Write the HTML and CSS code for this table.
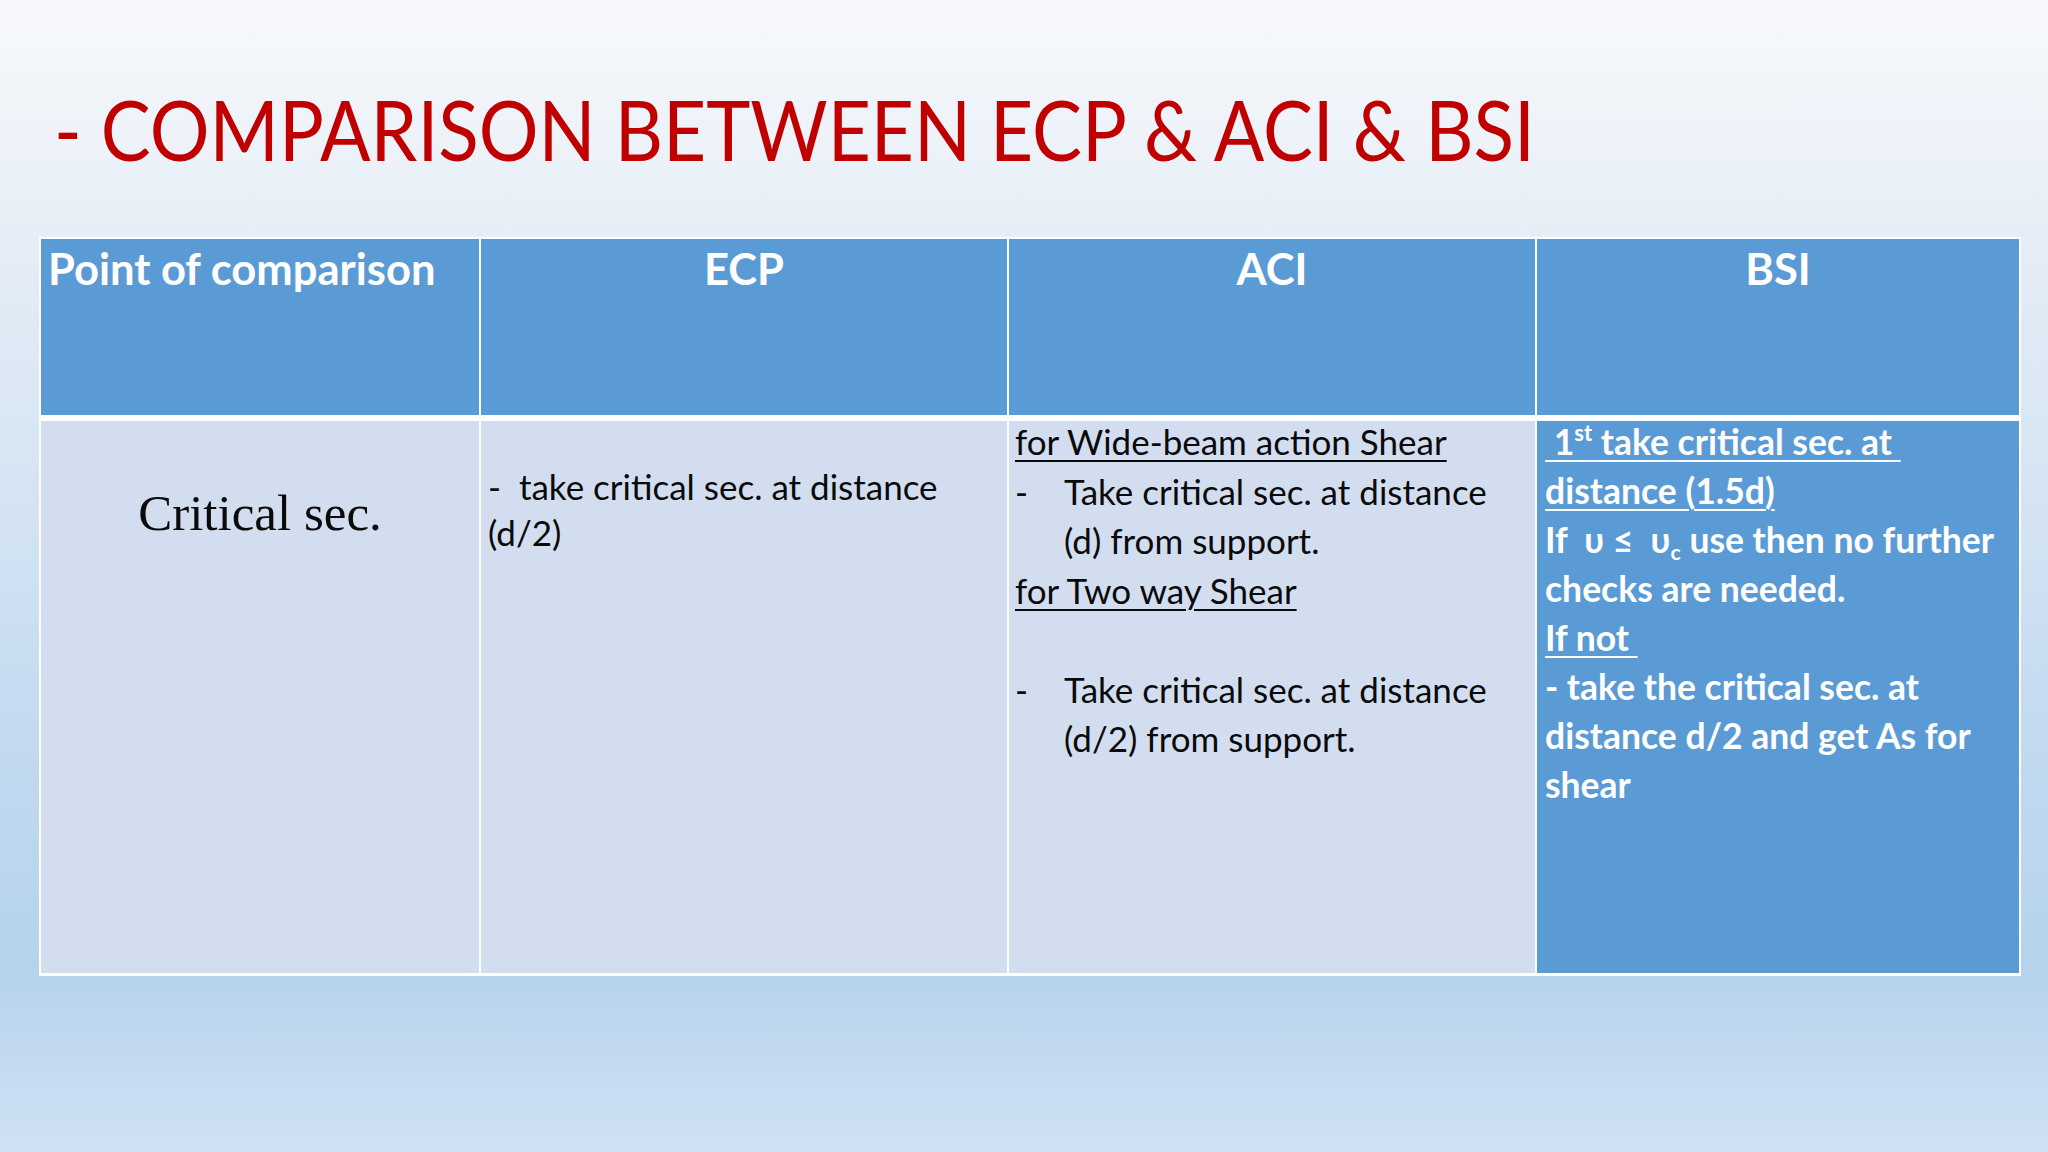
FILE: index.html
```html
<!DOCTYPE html>
<html lang="en">
<head>
<meta charset="utf-8">
<title>Comparison between ECP &amp; ACI &amp; BSI</title>
<link rel="stylesheet" href="styles.css">
</head>
<body>
<div class="slide">
  <h1 class="title"><span class="title-text">- COMPARISON BETWEEN ECP &amp; ACI &amp; BSI</span></h1>
  <div class="grid">
    <div class="hcell hleft">Point of comparison</div>
    <div class="hcell hcenter">ECP</div>
    <div class="hcell hcenter">ACI</div>
    <div class="hcell hcenter">BSI</div>

    <div class="bcell crit"><p class="crit-text">Critical sec.</p></div>

    <div class="bcell ecp">
      <p class="ecp-text">-&nbsp; take critical sec. at distance<br>(d/2)</p>
    </div>

    <div class="bcell aci">
      <div class="aci-text">
        <p class="line u">for Wide-beam action Shear</p>
        <div class="item">
          <span class="dash">-</span>
          <p>Take critical sec. at distance<br>(d) from support.</p>
        </div>
        <p class="line u">for Two way Shear</p>
        <p class="line blank">&nbsp;</p>
        <div class="item">
          <span class="dash">-</span>
          <p>Take critical sec. at distance<br>(d/2) from support.</p>
        </div>
      </div>
    </div>

    <div class="bcell bsi">
      <div class="bsi-text">
        <p class="line"><span class="u">&nbsp;1<sup>st</sup> take critical sec. at&nbsp;</span></p>
        <p class="line"><span class="u">distance (1.5d)</span></p>
        <p class="line">If&nbsp; υ ≤&nbsp; υ<sub>c</sub> use then no further</p>
        <p class="line">checks are needed.</p>
        <p class="line"><span class="u">If not&nbsp;</span></p>
        <p class="line">- take the critical sec. at</p>
        <p class="line">distance d/2 and get As for</p>
        <p class="line">shear</p>
      </div>
    </div>
  </div>
</div>
</body>
</html>
```
FILE: styles.css
```css
html, body {
  margin: 0;
  padding: 0;
}

body {
  width: 2048px;
  height: 1152px;
  overflow: hidden;
  font-family: "Lato", "Open Sans", "Liberation Sans", sans-serif;
  background: linear-gradient(to bottom,
    #f6f8fc 0%,
    #eef3f9 12%,
    #e5edf6 21%,
    #d3e3f3 45%,
    #c2d9ef 65%,
    #b5d3ec 84%,
    #c3daf0 92%,
    #d0e2f3 100%);
}

.slide {
  padding-top: 79px;
}

.title {
  margin: 0;
  padding-left: 54px;
  font-family: "Lato", "Liberation Sans", sans-serif;
  font-weight: 400;
  font-size: 83px;
  line-height: 100px;
  height: 100px;
  color: #c00000;
  white-space: nowrap;
}

.title-text {
  display: inline-block;
  transform: scaleX(0.9);
  transform-origin: left center;
}

.grid {
  margin-top: 58px;
  margin-left: 39px;
  width: 1978px;
  padding: 2px 2px 3px 2px;
  background: #ffffff;
  display: grid;
  grid-template-columns: 438px 526px 526px 482px;
  grid-template-rows: 176px 552px;
  column-gap: 2px;
  row-gap: 6px;
}

.hcell {
  background: #5b9bd5;
  color: #ffffff;
  font-weight: 700;
  font-size: 43.5px;
  line-height: 52px;
  padding-top: 3px;
  white-space: nowrap;
}

.hleft {
  padding-left: 7px;
}

.hcenter {
  text-align: center;
}

.bcell {
  background: #d2deef;
  color: #0a0a0a;
  font-size: 35px;
}

.bcell p {
  margin: 0;
}

.crit {
  text-align: center;
  padding-top: 62px;
}

.crit-text {
  font-family: "Liberation Serif", "DejaVu Serif", serif;
  font-size: 51px;
  line-height: 60px;
}

.ecp {
  padding: 42px 0 0 7px;
}

.ecp-text {
  line-height: 46px;
  white-space: nowrap;
}

.aci {
  padding: 0 0 0 6px;
}

.aci-text {
  margin-top: -4px;
  line-height: 49.5px;
  white-space: nowrap;
}

.u {
  text-decoration: underline;
  text-decoration-thickness: 2px;
  text-underline-offset: 5px;
}

.item {
  display: flex;
}

.dash {
  width: 49px;
  flex: none;
}

.bsi {
  background: #5b9bd5;
  color: #ffffff;
  font-weight: 700;
  font-size: 35.5px;
  padding: 0 0 0 8px;
}

.bsi-text {
  margin-top: -4px;
  line-height: 49px;
  white-space: nowrap;
}

.bsi sup {
  font-size: 0.62em;
  line-height: 0;
  vertical-align: 0.62em;
}

.bsi sub {
  font-size: 0.6em;
  line-height: 0;
  vertical-align: -0.35em;
}
```
